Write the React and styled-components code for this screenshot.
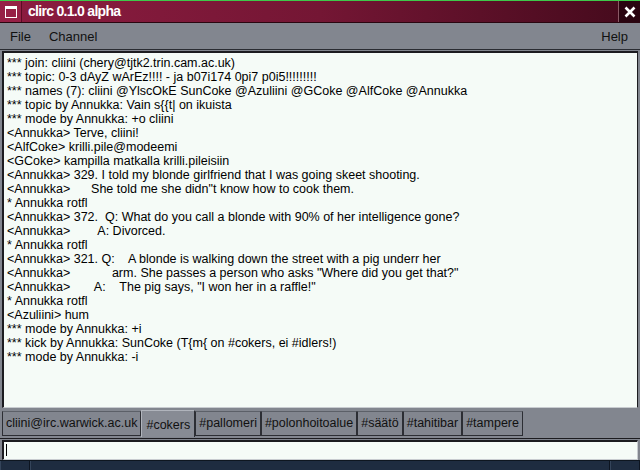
import React from 'react'
import styled, { createGlobalStyle } from 'styled-components';

const GlobalStyle = createGlobalStyle`
  html, body { margin: 0; padding: 0; background: #82868f; }
  body { font-family: "Liberation Sans", Arial, sans-serif; }
`;

const lines = [
  '*** join: cliini (chery@tjtk2.trin.cam.ac.uk)',
  '*** topic: 0-3 dAyZ wArEz!!!! - ja b07i174 0pi7 p0i5!!!!!!!!!',
  '*** names (7): cliini @YlscOkE SunCoke @Azuliini @GCoke @AlfCoke @Annukka',
  '*** topic by Annukka: Vain s{{t| on ikuista',
  '*** mode by Annukka: +o cliini',
  '<Annukka> Terve, cliini!',
  '<AlfCoke> krilli.pile@modeemi',
  '<GCoke> kampilla matkalla krilli.pileisiin',
  '<Annukka> 329. I told my blonde girlfriend that I was going skeet shooting.',
  '<Annukka>      She told me she didn"t know how to cook them.',
  '* Annukka rotfl',
  '<Annukka> 372.  Q: What do you call a blonde with 90% of her intelligence gone?',
  '<Annukka>        A: Divorced.',
  '* Annukka rotfl',
  '<Annukka> 321. Q:    A blonde is walking down the street with a pig underr her',
  '<Annukka>            arm. She passes a person who asks "Where did you get that?"',
  '<Annukka>       A:    The pig says, "I won her in a raffle!"',
  '* Annukka rotfl',
  '<Azuliini> hum',
  '*** mode by Annukka: +i',
  '*** kick by Annukka: SunCoke (T{m{ on #cokers, ei #idlers!)',
  '*** mode by Annukka: -i',
];

const tabs = ['cliini@irc.warwick.ac.uk', '#cokers', '#pallomeri', '#polonhoitoalue', '#säätö', '#tahitibar', '#tampere'];

export default class App extends React.Component {
  render() {
    return (
      <Window>
        <GlobalStyle />
        <TitleBar>
          <TitleIcon>
            <svg width="12" height="12" viewBox="0 0 12 12">
              <rect x="0.5" y="0.5" width="11" height="11" fill="none" stroke="#fff" />
              <rect x="0" y="0" width="12" height="3" fill="#fff" />
            </svg>
          </TitleIcon>
          <Title>clirc 0.1.0 alpha</Title>
          <CloseButton>
            <svg width="12" height="12" viewBox="0 0 12 12">
              <path d="M1.5 1.5 L10.5 10.5 M10.5 1.5 L1.5 10.5" stroke="#fff" strokeWidth="2.6" />
            </svg>
          </CloseButton>
        </TitleBar>
        <MenuBar>
          <MenuItem>File</MenuItem>
          <MenuItem>Channel</MenuItem>
          <MenuItem right>Help</MenuItem>
        </MenuBar>
        <ChatArea>
          {lines.map((l, i) => <Line key={i}>{l}</Line>)}
        </ChatArea>
        <TabBar>
          {tabs.map((t, i) => <Tab key={t} active={i === 1}>{t}</Tab>)}
        </TabBar>
        <InputBox>
          <Caret />
        </InputBox>
        <Taskbar>
          <TaskCell width="28px" />
          <TaskCell grow />
          <TaskCell width="28px" />
        </Taskbar>
      </Window>
    );
  }
}

const Window = styled.div`
  width: 640px;
  height: 470px;
  display: flex;
  flex-direction: column;
  background: #82868f;
  overflow: hidden;
`;

const TitleBar = styled.div`
  height: 21px;
  flex: none;
  display: flex;
  align-items: stretch;
  border-top: 1px solid #3fc84a;
  border-bottom: 1px solid #2a0610;
  background: linear-gradient(to right, #8c1c40 0%, #741634 50%, #440a1c 100%);
`;

const TitleIcon = styled.div`
  width: 21px;
  display: flex;
  align-items: center;
  justify-content: center;
  border-right: 1px solid #5a0c24;
  background: #962046;
`;

const Title = styled.div`
  flex: 1;
  color: #fff;
  font-weight: bold;
  font-size: 14px;
  letter-spacing: -0.7px;
  line-height: 20px;
  padding-left: 6px;
`;

const CloseButton = styled.div`
  width: 21px;
  display: flex;
  align-items: center;
  justify-content: center;
  border-left: 1px solid #8a5a66;
  background: #2a0410;
`;

const MenuBar = styled.div`
  height: 26px;
  flex: none;
  display: flex;
  align-items: center;
  padding: 0 12px 0 10px;
  gap: 18px;
  border-bottom: 1px solid #2a2c32;
`;

const MenuItem = styled.div`
  font-size: 13px;
  color: #111;
  margin-left: ${p => (p.right ? 'auto' : '0')};
`;

const ChatArea = styled.div`
  flex: 1;
  min-height: 0;
  margin: 1px 2px 2px 2px;
  padding: 3px 3px;
  background: #f5fbf7;
  border-top: 2px solid #1c1c20;
  border-left: 2px solid #1c1c20;
  border-right: 1px solid #1c1c20;
  border-bottom: 1px solid #c8ccd0;
  overflow: hidden;
`;

const Line = styled.div`
  white-space: pre;
  font-size: 12.5px;
  line-height: 14px;
  color: #000;
`;

const TabBar = styled.div`
  height: 28px;
  flex: none;
  display: flex;
  align-items: flex-start;
  padding: 0 2px;
  border-bottom: 1px solid #1c1c20;
`;

const Tab = styled.div`
  height: ${p => (p.active ? '27px' : '25px')};
  margin-top: ${p => (p.active ? '0' : '1px')};
  padding: ${p => (p.active ? '4px 4px 0 4px' : '1px 3px 0 3px')};
  box-sizing: border-box;
  font-size: 12.5px;
  line-height: 20px;
  color: #111;
  background: ${p => (p.active ? '#878b94' : '#82868f')};
  border: 1px solid #2c2e34;
  border-left-color: ${p => (p.active ? '#b0b4bc' : '#2c2e34')};
  border-top-color: ${p => (p.active ? '#b0b4bc' : '#5c6068')};
  border-bottom: ${p => (p.active ? 'none' : '1px solid #2c2e34')};
  white-space: nowrap;
`;

const InputBox = styled.div`
  height: 20px;
  flex: none;
  margin: 1px 2px 0 2px;
  box-sizing: border-box;
  background: #f5fbf7;
  border-top: 2px solid #1c1c20;
  border-left: 2px solid #1c1c20;
  border-right: 1px solid #c8ccd0;
  border-bottom: 1px solid #c8ccd0;
  padding: 2px 0 0 2px;
`;

const Caret = styled.div`
  width: 1px;
  height: 12px;
  background: #000;
`;

const Taskbar = styled.div`
  height: 9px;
  flex: none;
  display: flex;
  background: #1e2c40;
  border-top: 1px solid #0e1620;
`;

const TaskCell = styled.div`
  width: ${p => p.width || 'auto'};
  flex: ${p => (p.grow ? 1 : 'none')};
  border-right: 1px solid #0c1420;
  border-left: 1px solid #34445a;
`;
